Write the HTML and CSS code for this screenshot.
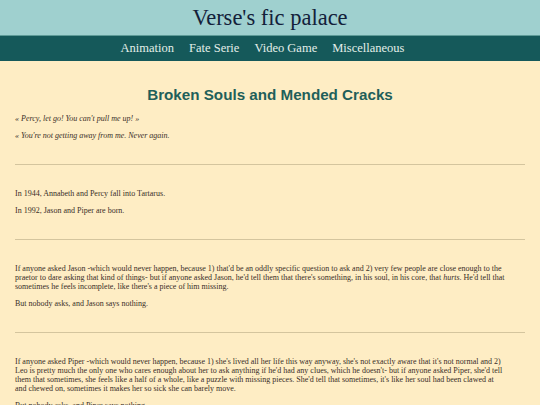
FILE: index.html
```html
<!DOCTYPE html>
<html>
<head>
<meta charset="utf-8">
<link rel="stylesheet" href="styles.css">
</head>
<body>
<header class="site-header">
  <h1 class="site-title">Verse's fic palace</h1>
</header>
<nav class="site-nav">
  <a href="#">Animation</a>
  <a href="#">Fate Serie</a>
  <a href="#">Video Game</a>
  <a href="#">Miscellaneous</a>
</nav>
<main class="content">
  <h2 class="story-title">Broken Souls and Mended Cracks</h2>
  <section class="block">
    <p class="quote">« Percy, let go! You can't pull me up! »</p>
    <p class="quote">« You're not getting away from me. Never again.</p>
  </section>
  <hr class="sep">
  <section class="block">
    <p>In 1944, Annabeth and Percy fall into Tartarus.</p>
    <p>In 1992, Jason and Piper are born.</p>
  </section>
  <hr class="sep">
  <section class="block">
    <p>If anyone asked Jason -which would never happen, because 1) that'd be an oddly specific question to ask and 2) very few people are close enough to the praetor to dare asking that kind of things- but if anyone asked Jason, he'd tell them that there's something, in his soul, in his core, that <em>hurts</em>. He'd tell that sometimes he feels incomplete, like there's a piece of him missing.</p>
    <p>But nobody asks, and Jason says nothing.</p>
  </section>
  <hr class="sep">
  <section class="block">
    <p>If anyone asked Piper -which would never happen, because 1) she's lived all her life this way anyway, she's not exactly aware that it's not normal and 2) Leo is pretty much the only one who cares enough about her to ask anything if he'd had any clues, which he doesn't- but if anyone asked Piper, she'd tell them that sometimes, she feels like a half of a whole, like a puzzle with missing pieces. She'd tell that sometimes, it's like her soul had been clawed at and chewed on, sometimes it makes her so sick she can barely move.</p>
    <p class="last">But nobody asks, and Piper says nothing.</p>
  </section>
</main>
</body>
</html>
```
FILE: styles.css
```css
html, body {
  margin: 0;
  padding: 0;
  background: #feedc4;
}
body {
  font-family: "Liberation Serif", "DejaVu Serif", serif;
  color: #3a2d28;
}
.site-header {
  background: #9fd0cf;
  border-bottom: 1px solid #5e9b98;
  height: 35px;
  display: flex;
  align-items: center;
  justify-content: center;
}
.site-title {
  margin: 0;
  font-weight: normal;
  font-size: 22.5px;
  color: #13213a;
}
.site-nav {
  background: #15595a;
  height: 25px;
  display: flex;
  justify-content: center;
  align-items: center;
}
.site-nav a {
  color: #e3efe9;
  text-decoration: none;
  font-size: 12.5px;
  padding-right: 15px;
}
.content {
  padding: 0 15px;
}
.story-title {
  font-family: "Liberation Sans", Arial, sans-serif;
  font-weight: bold;
  font-size: 15.2px;
  color: #1f5f5a;
  text-align: center;
  margin: 25px 0 11px;
}
.block {
  padding-right: 20px;
}
.block p {
  font-size: 8px;
  line-height: 9px;
  margin: 8px 0;
}
.block .quote {
  font-style: italic;
}
.block .last {
  margin-top: 7px;
}
.sep {
  border: 0;
  border-top: 1px solid #d4c59e;
  margin: 24px 0;
}
```
